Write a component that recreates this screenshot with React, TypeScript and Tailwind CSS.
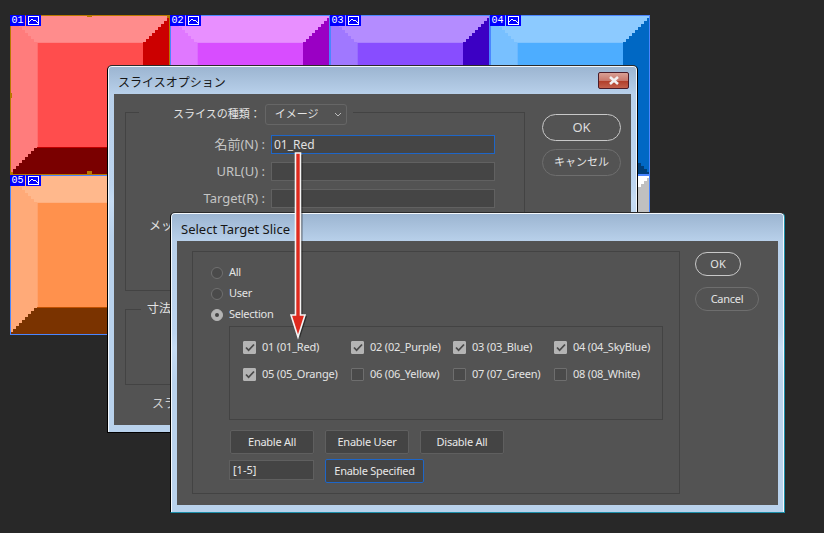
import React from "react";

type Shade = { top: string; topEdge: string; left: string; leftEdge: string; center: string; right: string; bottom: string; bottomEdge: string };

const tiles: { id: string; c: Shade; selected?: boolean }[] = [
  { id: "01", selected: true, c: { top: "#ff8c8c", topEdge: "#ff8080", left: "#ff7c7c", leftEdge: "#ff6e6e", center: "#ff4d4d", right: "#cc0000", bottom: "#7a0000", bottomEdge: "#c00000" } },
  { id: "02", c: { top: "#e88fff", topEdge: "#e484ff", left: "#e078ff", leftEdge: "#dc6cff", center: "#d84dff", right: "#9a00c4", bottom: "#5e0078", bottomEdge: "#9000b8" } },
  { id: "03", c: { top: "#b48cff", topEdge: "#aa80ff", left: "#a078ff", leftEdge: "#986cff", center: "#884dff", right: "#3c00c4", bottom: "#250078", bottomEdge: "#3800b8" } },
  { id: "04", c: { top: "#8ccaff", topEdge: "#80c4ff", left: "#78c0ff", leftEdge: "#6cb8ff", center: "#4dadff", right: "#0068c4", bottom: "#003f78", bottomEdge: "#0060b8" } },
  { id: "05", c: { top: "#ffb88c", topEdge: "#ffb080", left: "#ffaa78", leftEdge: "#ffa26c", center: "#ff914d", right: "#c45400", bottom: "#7a3300", bottomEdge: "#c05000" } },
  { id: "06", c: { top: "#ffe98c", topEdge: "#ffe680", left: "#ffe278", leftEdge: "#ffdf6c", center: "#ffd84d", right: "#c4a000", bottom: "#786000", bottomEdge: "#b89600" } },
  { id: "07", c: { top: "#8cf09c", topEdge: "#80ee92", left: "#78ea88", leftEdge: "#6ce67e", center: "#4ddf60", right: "#00a018", bottom: "#006010", bottomEdge: "#009818" } },
  { id: "08", c: { top: "#ffffff", topEdge: "#fafafa", left: "#f2f2f2", leftEdge: "#ececec", center: "#e6e6e6", right: "#c0c0c0", bottom: "#808080", bottomEdge: "#b8b8b8" } },
];

const steps = Array.from({ length: 9 }, (_, i) => i * 3);

function TileArt({ c }: { c: Shade }) {
  return (
    <svg width="160" height="160" viewBox="0 0 160 160" shapeRendering="crispEdges" className="absolute inset-0">
      <rect width="160" height="160" fill={c.center} />
      <rect x="25" y="27" width="3" height="106" fill={c.leftEdge} />
      <rect x="27" y="25" width="106" height="3" fill={c.topEdge} />
      <rect x="27" y="132" width="106" height="3" fill={c.bottomEdge} />
      {steps.map((s) => (
        <React.Fragment key={s}>
          <rect x={s} y={s} width="3" height={160 - 2 * s} fill={c.left} />
          <rect x={157 - s} y={s} width="3" height={160 - 2 * s} fill={c.right} />
          <rect x={s} y={s} width={160 - 2 * s} height="3" fill={c.top} />
          <rect x={s} y={157 - s} width={160 - 2 * s} height="3" fill={c.bottom} />
        </React.Fragment>
      ))}
      <rect x="133" y="27" width="1" height="106" fill={c.right} />
    </svg>
  );
}

function Tile({ id, c, selected }: { id: string; c: Shade; selected?: boolean }) {
  return (
    <div className="relative w-[160px] h-[160px]">
      <TileArt c={c} />
      <div className={`absolute inset-0 border ${selected ? "border-[#b87800]" : "border-[#4a86ff]"}`} />
      <div className="absolute left-0 top-0 flex h-[11px] gap-px">
        <span className="w-[15px] bg-[#0000ff] text-center text-[10px] leading-[11px] text-white font-['Liberation_Mono',monospace]">{id}</span>
        <svg width="15" height="11" viewBox="0 0 15 11" shapeRendering="crispEdges" className="bg-[#0000ff]">
          <rect x="2.5" y="1.5" width="10" height="8" fill="none" stroke="#fff" />
          <path d="M3 7l3-3 2 2 1-1 3 3" fill="none" stroke="#fff" strokeWidth="1" />
        </svg>
      </div>
      {selected && (
        <>
          <div className="absolute left-[77px] top-0 w-[5px] h-[2px] bg-[#b87800]" />
          <div className="absolute left-0 top-[78px] w-[2px] h-[5px] bg-[#b87800]" />
          <div className="absolute left-[77px] bottom-0 w-[5px] h-[4px] bg-[#b87800]" />
          <div className="absolute right-0 top-0 w-[3px] h-[3px] bg-[#b87800]" />
          <div className="absolute left-0 bottom-0 w-[3px] h-[3px] bg-[#b87800]" />
        </>
      )}
    </div>
  );
}

function Dialog({ title, titleClass, className, children, close }: { title: string; titleClass: string; className: string; children: React.ReactNode; close?: boolean }) {
  return (
    <div className={`absolute flex flex-col rounded-t-[5px] border border-black border-t-[#2a2a2a] bg-[linear-gradient(180deg,#9bb4d0_0px,#b8d0ea_28px,#bdd5ef_120px,#c6dcf3_135px,#b9d2ec_170px)] shadow-[inset_0_1px_0_#f4f8fc,inset_1px_0_0_#f4f8fc,inset_-1px_0_0_#f4f8fc] ${className}`}>
      <div className="flex h-[28px] shrink-0 items-center justify-between pl-[10px] pr-[8px] pt-[6px]">
        <span className={`text-[#161616] ${titleClass}`}>{title}</span>
        {close && (
          <div className="-mt-[6px] flex h-[17px] w-[31px] items-center justify-center rounded-[2px] border border-[#4a1c28] bg-[linear-gradient(180deg,#d9a095_0px,#c9796c_50%,#b03c28_52%,#c2604c_100%)]">
            <svg width="12" height="9" viewBox="0 0 12 9">
              <path d="M2 1l8 7M10 1l-8 7" stroke="#f2f2f2" strokeWidth="2.6" />
            </svg>
          </div>
        )}
      </div>
      <div className="mx-[6px] mb-[7px] flex flex-1 bg-[#535353]">{children}</div>
    </div>
  );
}

function PillButton({ label, className }: { label: string; className: string }) {
  return <div className={`flex items-center justify-center rounded-full border ${className}`}>{label}</div>;
}

function Field({ label, value, focus }: { label: string; value?: string; focus?: boolean }) {
  return (
    <div className="flex h-[19px] items-center">
      <span className="w-[139px] text-right text-[13px] text-[#c4c4c4]">{label}</span>
      <div className={`ml-[6px] flex h-[19px] w-[224px] items-center border bg-[#454545] px-[2px] text-[12px] text-[#e0e0e0] ${focus ? "border-[#1e66c8]" : "border-[#616161]"}`}>
        {value}
      </div>
    </div>
  );
}

function SliceOptions() {
  return (
    <Dialog title="スライスオプション" titleClass="text-[12px]" close className="left-[107px] top-[65px] w-[531px] h-[368px]">
      <div className="flex w-[411px] flex-col pl-[11px] pt-[18px]">
        <div className="relative h-[179px] w-[400px] border border-[#434343]">
          <div className="absolute left-[13px] -top-[9px] flex h-[21px] w-[214px] items-center gap-[4px] bg-[#535353] pl-[34px]">
            <span className="whitespace-nowrap text-[11px] text-[#e4e4e4]">スライスの種類：</span>
            <div className="flex h-[21px] w-[82px] items-center justify-between rounded-[3px] border border-[#666] pl-[9px] pr-[4px] text-[11px] text-[#e4e4e4]">
              イメージ
              <svg width="8" height="5" viewBox="0 0 8 5"><path d="M1 1l3 3 3-3" fill="none" stroke="#bbb" /></svg>
            </div>
          </div>
          <div className="flex flex-col gap-[8px] pt-[22px]">
            <Field label="名前(N) :" value="01_Red" focus />
            <Field label="URL(U) :" />
            <Field label="Target(R) :" />
          </div>
          <div className="pl-[23px] pt-[9px] text-[12px] text-[#e4e4e4]">メッセージ</div>
        </div>
        <div className="relative mt-[18px] h-[76px] w-[400px] border border-[#434343]">
          <span className="absolute left-[15px] -top-[10px] bg-[#535353] px-[6px] text-[12px] text-[#e4e4e4]">寸法</span>
        </div>
        <div className="pl-[27px] pt-[10px] text-[12px] text-[#d0d0d0]">スライスの背景色</div>
      </div>
      <div className="flex flex-col gap-[8px] pl-[17px] pt-[20px]">
        <PillButton label="OK" className="h-[27px] w-[79px] border-[#c8c8c8] text-[13px] text-[#dcdcdc]" />
        <PillButton label="キャンセル" className="h-[27px] w-[79px] border-[#6e6e6e] text-[11px] text-[#e4e4e4]" />
      </div>
    </Dialog>
  );
}

function Radio({ label, checked }: { label: string; checked?: boolean }) {
  return (
    <div className="flex h-[21px] items-center gap-[6px]">
      <span className={`flex h-[12px] w-[12px] items-center justify-center rounded-full border ${checked ? "border-[#b4b4b4] bg-[#b4b4b4]" : "border-[#707070] bg-[#4a4a4a]"}`}>
        {checked && <span className="h-[4px] w-[4px] rounded-full bg-[#444]" />}
      </span>
      <span className="text-[11px] tracking-[-0.25px] text-[#e4e4e4]">{label}</span>
    </div>
  );
}

function Check({ label, checked }: { label: string; checked?: boolean }) {
  return (
    <div className="flex h-[27px] items-center gap-[6px]">
      <span className={`flex h-[13px] w-[13px] shrink-0 items-center justify-center rounded-[1px] border ${checked ? "border-[#b4b4b4] bg-[#b4b4b4]" : "border-[#6e6e6e] bg-[#4a4a4a]"}`}>
        {checked && (
          <svg width="10" height="9" viewBox="0 0 10 9"><path d="M1 4.5l2.6 2.8L9 1.5" fill="none" stroke="#4a4a4a" strokeWidth="1.8" /></svg>
        )}
      </span>
      <span className="whitespace-nowrap text-[11px] tracking-[-0.2px] text-[#e4e4e4]">{label}</span>
    </div>
  );
}

function FlatButton({ label, className = "w-[84px] border-[#5f5f5f]" }: { label: string; className?: string }) {
  return <div className={`flex h-[24px] items-center justify-center rounded-[2px] border bg-[#444444] text-[11px] tracking-[-0.25px] text-[#e8e8e8] ${className}`}>{label}</div>;
}

function SelectTarget() {
  return (
    <Dialog title="Select Target Slice" titleClass="text-[13px]" className="left-[170px] top-[212px] w-[615px] h-[301px] border-r-[#1c8ea8] border-b-[#1c8ea8]">
      <div className="pl-[15px] pt-[10px]">
        <div className="h-[243px] w-[488px] border border-[#434343] pl-[18px] pt-[10px]">
          <Radio label="All" />
          <Radio label="User" />
          <Radio label="Selection" checked />
          <div className="ml-[18px] mt-[1px] grid h-[94px] w-[434px] grid-cols-[108px_102px_101px_1fr] content-start border border-[#434343] pl-[13px] pt-[7px]">
            <Check label="01 (01_Red)" checked />
            <Check label="02 (02_Purple)" checked />
            <Check label="03 (03_Blue)" checked />
            <Check label="04 (04_SkyBlue)" checked />
            <Check label="05 (05_Orange)" checked />
            <Check label="06 (06_Yellow)" />
            <Check label="07 (07_Green)" />
            <Check label="08 (08_White)" />
          </div>
          <div className="ml-[19px] mt-[10px] flex gap-[11px]">
            <FlatButton label="Enable All" />
            <FlatButton label="Enable User" />
            <FlatButton label="Disable All" />
          </div>
          <div className="ml-[18px] mt-[5px] flex items-start gap-[11px]">
            <div className="mt-[1px] flex h-[20px] w-[85px] items-center border border-[#5f5f5f] bg-[#444444] px-[3px] text-[11px] text-[#e8e8e8]">[1-5]</div>
            <FlatButton label="Enable Specified" className="w-[99px] border-[#1e66c8]" />
          </div>
        </div>
      </div>
      <div className="flex flex-col items-start gap-[11px] pl-[15px] pt-[11px]">
        <PillButton label="OK" className="h-[24px] w-[46px] border-[#c8c8c8] text-[11px] text-[#e4e4e4]" />
        <PillButton label="Cancel" className="h-[24px] w-[64px] border-[#6e6e6e] text-[11px] tracking-[-0.25px] text-[#e4e4e4]" />
      </div>
    </Dialog>
  );
}

function Arrow() {
  return (
    <svg width="24" height="200" viewBox="0 0 24 200" className="absolute left-[286px] top-[145px]">
      <path d="M9.5 9H14.5V170H19L12 192L5 170H9.5Z" transform="translate(2 1)" fill="#000" opacity="0.45" />
      <path d="M9.5 8H14.5V170H19L12 192L5 170H9.5Z" fill="#df2a1e" stroke="#f4f4f4" strokeWidth="1.6" />
    </svg>
  );
}

export default function App() {
  return (
    <div className="relative h-[533px] w-[824px] overflow-hidden bg-[#282828] pl-[10px] pt-[15px] font-['Noto_Sans','Noto_Sans_CJK_JP',sans-serif]">
      <div className="grid w-[640px] grid-cols-4">
        {tiles.map((t) => (
          <Tile key={t.id} id={t.id} c={t.c} selected={t.selected} />
        ))}
      </div>
      <SliceOptions />
      <SelectTarget />
      <Arrow />
    </div>
  );
}
